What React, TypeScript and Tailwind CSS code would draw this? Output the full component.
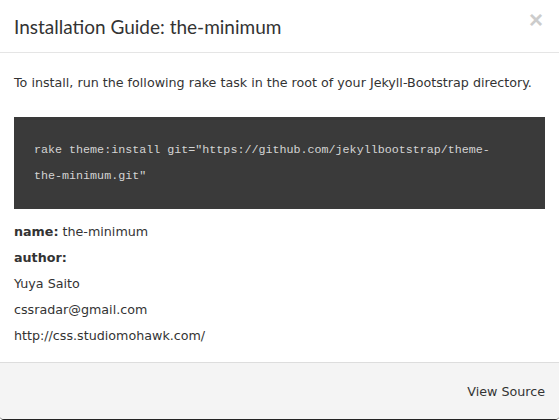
import React from 'react';

export default function App() {
    return (
        <div className="w-[559px] h-[420px] bg-white flex flex-col overflow-hidden rounded-b-[4px] border-b border-[#222] text-[#333]" style={{ fontFamily: '"DejaVu Sans", sans-serif' }}>
            {/* HEADER */}
            <div className="h-[53px] shrink-0 border-b border-[#e5e5e5] flex items-center justify-between pl-[14px] pr-[16px]">
                <h3 className="text-[19px] text-[#333] font-normal mt-[2px]" style={{ fontFamily: 'Lato, sans-serif' }}>
                    Installation Guide: the-minimum
                </h3>
                <span className="text-[24px] font-bold text-[#cccccc] leading-none -mt-[12px]" style={{ fontFamily: '"Liberation Sans", sans-serif' }}>
                    ×
                </span>
            </div>

            {/* BODY */}
            <div className="flex-1 px-[14px] pt-[20px] text-[12.7px]">
                <p className="leading-[20px]">
                    To install, run the following rake task in the root of your Jekyll-Bootstrap directory.
                </p>
                <pre className="mt-[24px] bg-[#3a3a3a] text-[#d4d4d4] pl-[20px] pr-[40px] py-[20px] text-[11.7px] leading-[26px] whitespace-pre-wrap" style={{ fontFamily: '"Liberation Mono", monospace' }}>
                    rake theme:install git="https://github.com/jekyllbootstrap/theme-the-minimum.git"
                </pre>
                <div className="mt-[10px] leading-[26px]">
                    <div><strong>name:</strong> the-minimum</div>
                    <div><strong>author:</strong></div>
                    <div>Yuya Saito</div>
                    <div>cssradar@gmail.com</div>
                    <div>http://css.studiomohawk.com/</div>
                </div>
            </div>

            {/* FOOTER */}
            <div className="h-[57px] shrink-0 bg-[#f4f4f4] border-t border-[#ddd] flex items-center justify-end pr-[14px] text-[12.7px]">
                <span className="mt-[1px]">View Source</span>
            </div>
        </div>
    );
}
